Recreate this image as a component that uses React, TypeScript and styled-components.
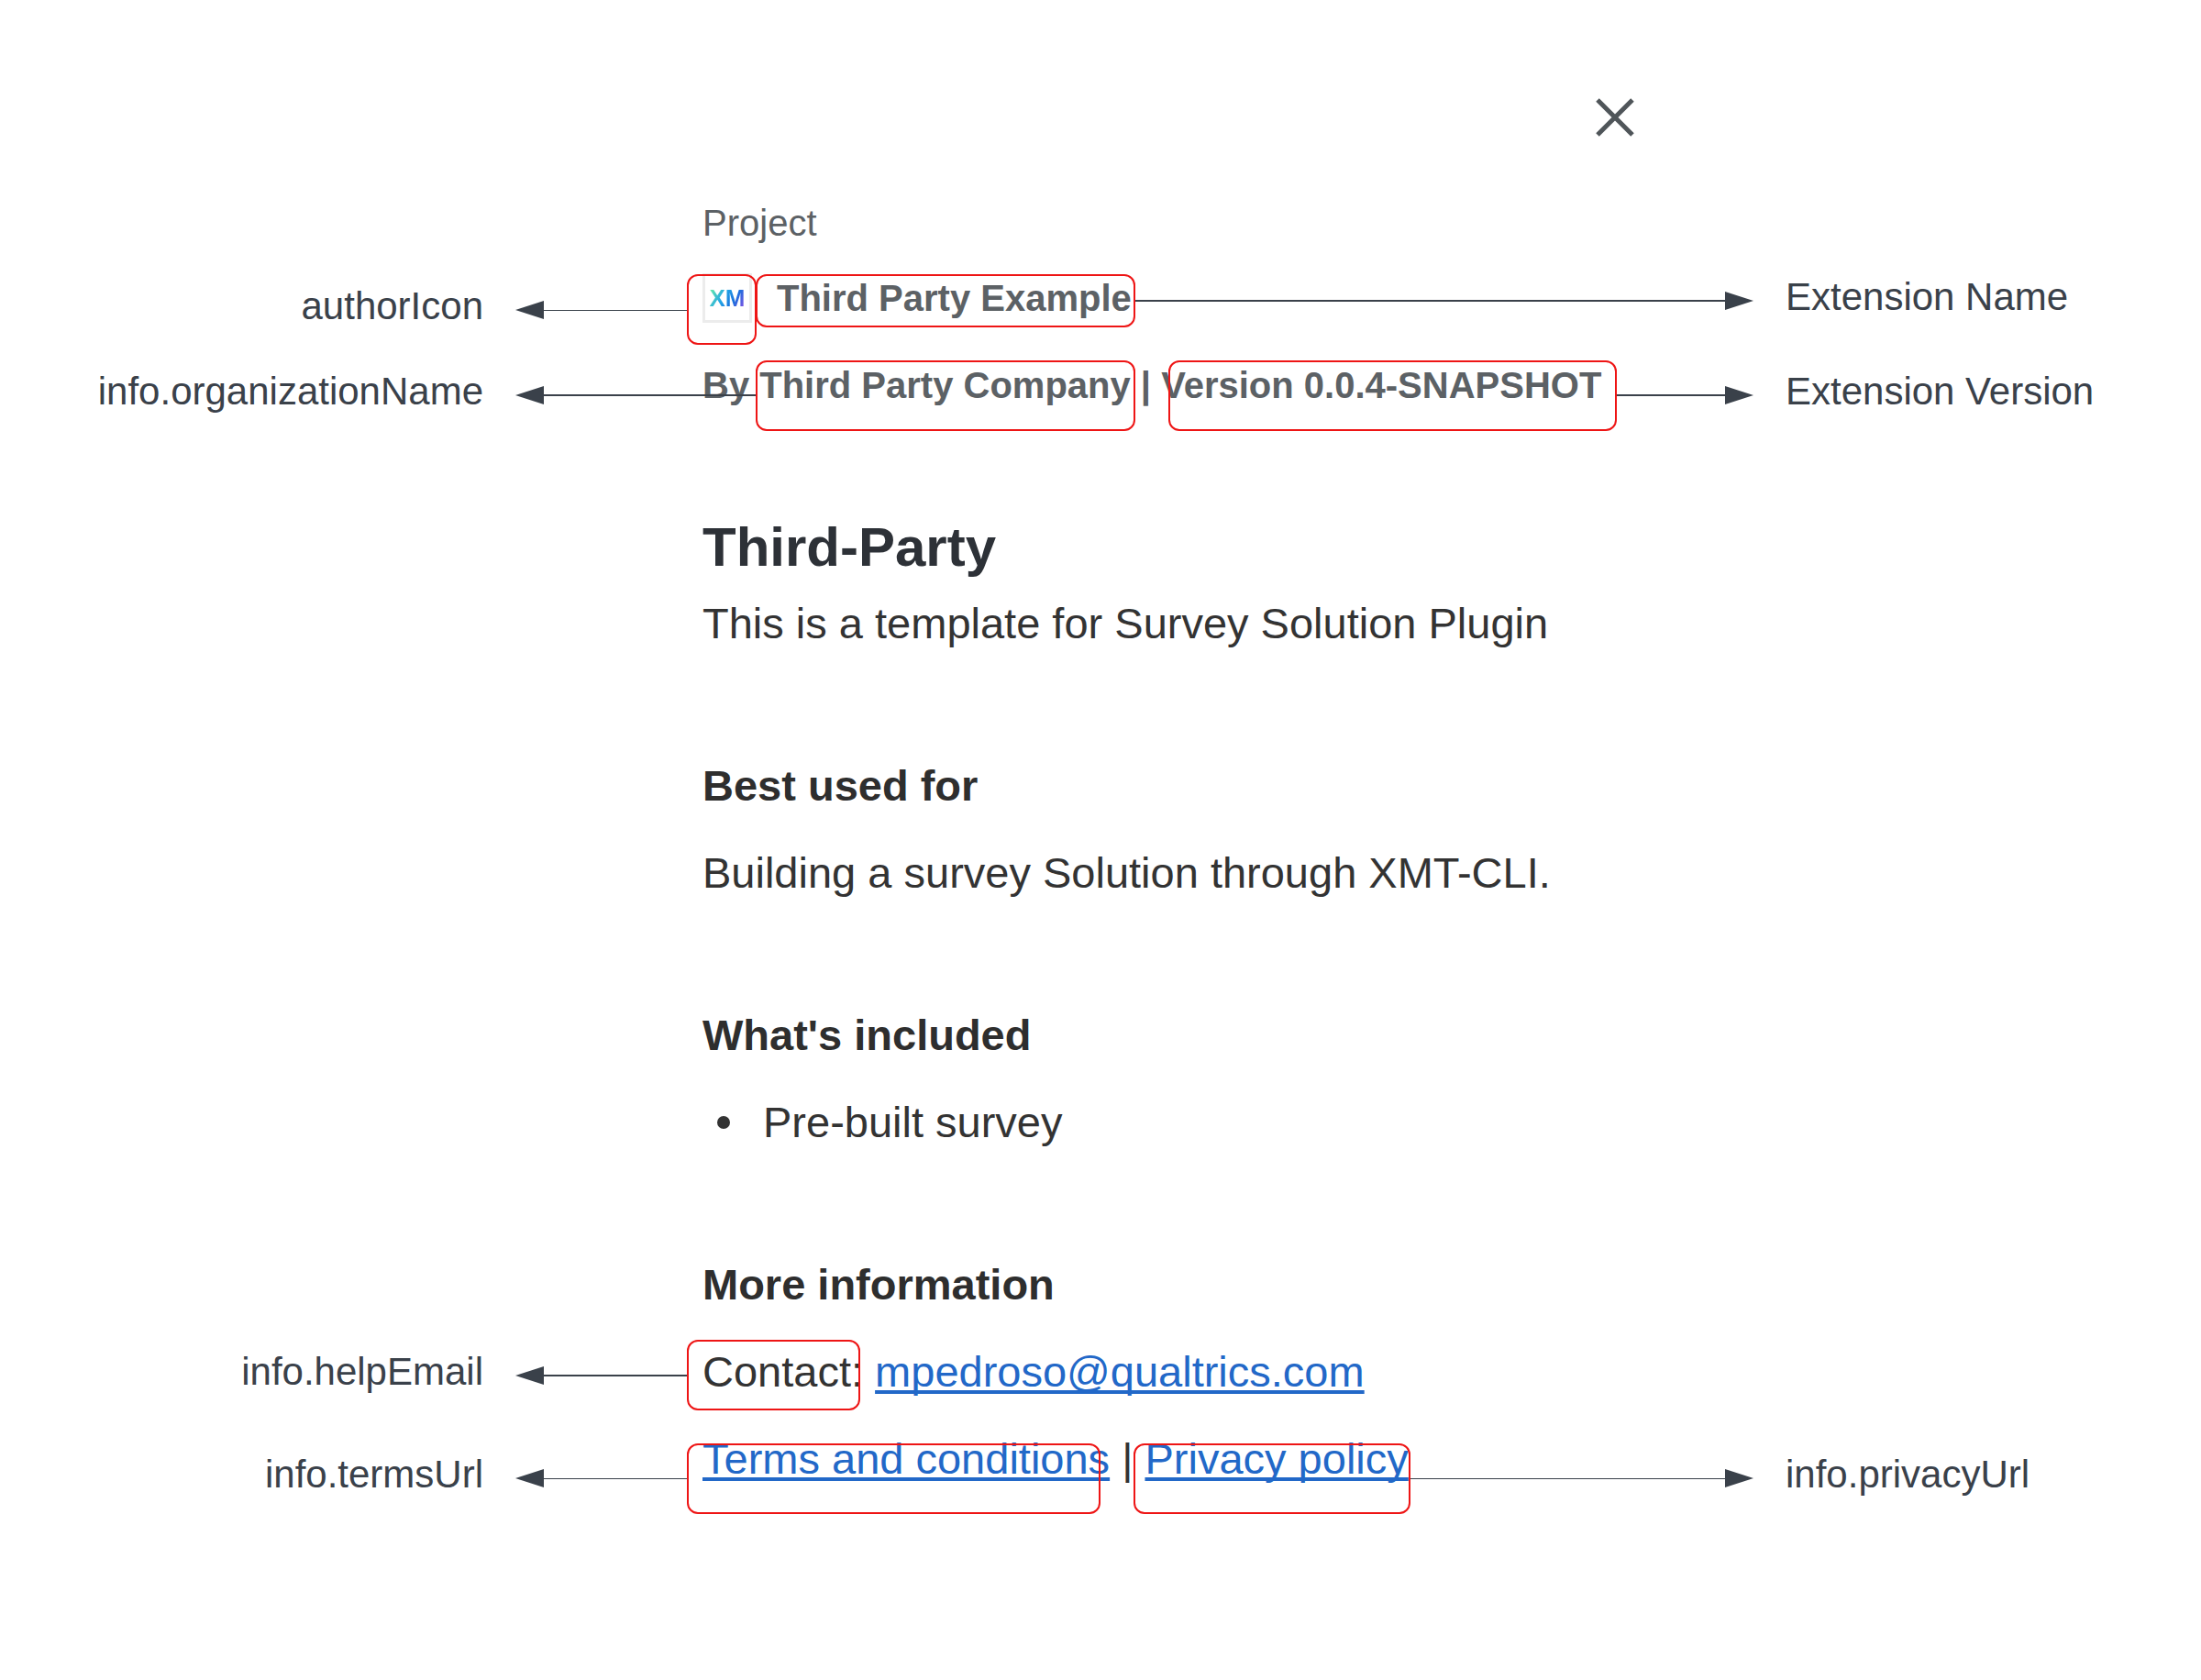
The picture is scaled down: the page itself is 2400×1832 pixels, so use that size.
import React from "react";
import styled, { createGlobalStyle } from "styled-components";

const GlobalStyle = createGlobalStyle`
  *, *::before, *::after { box-sizing: border-box; }
  body {
    margin: 0;
    background: #fff;
    font-family: "Liberation Sans", Arial, sans-serif;
  }
  h1, h2, p, ul { margin: 0; padding: 0; font-size: inherit; }
`;

const INK = "#3a414a";

/* ---------- page ---------- */

const Page = styled.main`
  display: grid;
  grid-template-columns: minmax(0, 383fr) 1018px minmax(0, 308fr);
  min-height: 100vh;
  overflow: hidden;
`;

const Stage = styled.div`
  grid-column: 2;
  position: relative;
`;

/* ---------- details panel ---------- */

const Panel = styled.article`
  display: flex;
  flex-direction: column;
  gap: 117px;
  padding: 107px 0 211px;
  color: #333;
  font-size: 47px;
  line-height: 60px;
  white-space: nowrap;
`;

const Header = styled.header`
  display: flex;
  flex-direction: column;
  color: #5c6165;
  font-size: 40px;
  line-height: 48px;
`;

const CloseButton = styled.button`
  align-self: flex-end;
  display: flex;
  width: 44px;
  height: 44px;
  margin-bottom: 68px;
  padding: 0;
  border: 0;
  background: none;
  color: #4f5559;
  cursor: pointer;
`;

const Kind = styled.p`
  margin-bottom: 31px;
`;

const NameRow = styled.div`
  display: flex;
  align-items: center;
  gap: 27px;
  margin-bottom: 44px;
`;

const AuthorIcon = styled.span`
  display: flex;
  align-items: center;
  justify-content: center;
  width: 54px;
  height: 54px;
  border: 3px solid #ececec;
`;

const AuthorMark = styled.span`
  background: linear-gradient(120deg, #5fe3b0 10%, #22a5e6 40%, #1b6fdc 65%, #8a4fe6 95%);
  background-clip: text;
  -webkit-background-clip: text;
  color: transparent;
  font-size: 26px;
  font-weight: 700;
  line-height: 30px;
`;

const Strong = styled.p`
  font-weight: 700;
`;

const Section = styled.section<{ $gap?: number }>`
  display: flex;
  flex-direction: column;
  gap: ${({ $gap = 35 }) => $gap}px;
`;

const Title = styled.h1`
  color: #2d3137;
  font-size: 60px;
  line-height: 72px;
`;

const Heading = styled.h2`
  color: #2e2e2e;
  font-weight: 700;
`;

const List = styled.ul`
  list-style: none;
`;

const ListItem = styled.li`
  display: flex;
  align-items: center;
  gap: 36px;
  padding-left: 16px;

  &::before {
    content: "";
    width: 14px;
    height: 14px;
    border-radius: 50%;
    background: #333;
  }
`;

const Link = styled.a`
  color: #2268c8;
  text-decoration: underline;
  text-decoration-thickness: 4px;
  text-underline-offset: 4px;
  text-decoration-skip-ink: none;
`;

/* ---------- annotations drawn over the panel ---------- */

const Outline = styled.div<{ $x: number; $y: number; $w: number; $h: number }>`
  position: absolute;
  left: ${({ $x }) => $x}px;
  top: ${({ $y }) => $y}px;
  width: ${({ $w }) => $w}px;
  height: ${({ $h }) => $h}px;
  border: 2px solid #ee1515;
  border-radius: 12px;
  pointer-events: none;
`;

const Callout = styled.div<{ $side: "left" | "right"; $from: number; $y: number }>`
  position: absolute;
  top: ${({ $y }) => $y - 28}px;
  ${({ $side, $from }) =>
    $side === "left" ? `right: calc(100% - ${$from}px);` : `left: ${$from}px;`}
  display: flex;
  flex-direction: ${({ $side }) => ($side === "left" ? "row-reverse" : "row")};
  align-items: center;
  height: 56px;
  color: ${INK};
  pointer-events: none;
`;

const Line = styled.span<{ $length: number; $weight: number }>`
  width: ${({ $length }) => $length}px;
  height: ${({ $weight }) => $weight}px;
  background: ${INK};
`;

const Head = styled.svg<{ $side: "left" | "right" }>`
  width: 31px;
  height: 20px;
  fill: ${INK};
  transform: ${({ $side }) => ($side === "left" ? "scaleX(-1)" : "none")};
`;

const Label = styled.span`
  padding: 0 35px 8px;
  font-size: 42px;
  line-height: 48px;
  white-space: nowrap;
`;

/* Distance from the panel's left edge to where the arrow heads begin. */
const HEAD_LEFT = -173;
const HEAD_RIGHT = 1115;

type Note = {
  label: string;
  side: "left" | "right";
  box: [number, number, number, number];
  lineY: number;
  weight: number;
};

const notes: Note[] = [
  { label: "authorIcon", side: "left", box: [-17, 299, 76, 77], lineY: 338, weight: 1 },
  { label: "Extension Name", side: "right", box: [58, 299, 414, 58], lineY: 328, weight: 2 },
  { label: "info.organizationName", side: "left", box: [58, 393, 414, 77], lineY: 431, weight: 2 },
  { label: "Extension Version", side: "right", box: [508, 393, 489, 77], lineY: 431, weight: 2 },
  { label: "info.helpEmail", side: "left", box: [-17, 1461, 189, 77], lineY: 1500, weight: 2 },
  { label: "info.termsUrl", side: "left", box: [-17, 1574, 451, 77], lineY: 1612, weight: 1 },
  { label: "info.privacyUrl", side: "right", box: [470, 1574, 302, 77], lineY: 1612, weight: 1 },
];

function Annotation({ label, side, box, lineY, weight }: Note) {
  const [x, y, w, h] = box;
  const from = side === "left" ? x : x + w;
  const length = side === "left" ? from - HEAD_LEFT : HEAD_RIGHT - from;
  return (
    <>
      <Callout $side={side} $from={from} $y={lineY}>
        <Line $length={length} $weight={weight} />
        <Head $side={side} viewBox="0 0 31 20" aria-hidden="true">
          <path d="M0 0 L31 10 L0 20 Z" />
        </Head>
        <Label>{label}</Label>
      </Callout>
      <Outline $x={x} $y={y} $w={w} $h={h} />
    </>
  );
}

export default function App() {
  return (
    <>
      <GlobalStyle />
      <Page>
        <Stage>
          <Panel>
            <Header>
              <CloseButton type="button" aria-label="Close">
                <svg width="44" height="44" viewBox="0 0 44 44" aria-hidden="true">
                  <path
                    d="M2 2 L40 40 M40 2 L2 40"
                    fill="none"
                    stroke="currentColor"
                    strokeWidth="5"
                  />
                </svg>
              </CloseButton>
              <Kind>Project</Kind>
              <NameRow>
                <AuthorIcon>
                  <AuthorMark>XM</AuthorMark>
                </AuthorIcon>
                <Strong>Third Party Example</Strong>
              </NameRow>
              <Strong>By Third Party Company | Version 0.0.4-SNAPSHOT</Strong>
            </Header>

            <Section $gap={17}>
              <Title>Third-Party</Title>
              <p>This is a template for Survey Solution Plugin</p>
            </Section>

            <Section>
              <Heading>Best used for</Heading>
              <p>Building a survey Solution through XMT-CLI.</p>
            </Section>

            <Section>
              <Heading>What's included</Heading>
              <List>
                <ListItem>Pre-built survey</ListItem>
              </List>
            </Section>

            <Section>
              <Heading>More information</Heading>
              <p>
                Contact: <Link href="mailto:mpedroso@qualtrics.com">mpedroso@qualtrics.com</Link>
              </p>
              <p>
                <Link href="#terms">Terms and conditions</Link> |{" "}
                <Link href="#privacy">Privacy policy</Link>
              </p>
            </Section>
          </Panel>

          {notes.map((note) => (
            <Annotation key={note.label} {...note} />
          ))}
        </Stage>
      </Page>
    </>
  );
}
